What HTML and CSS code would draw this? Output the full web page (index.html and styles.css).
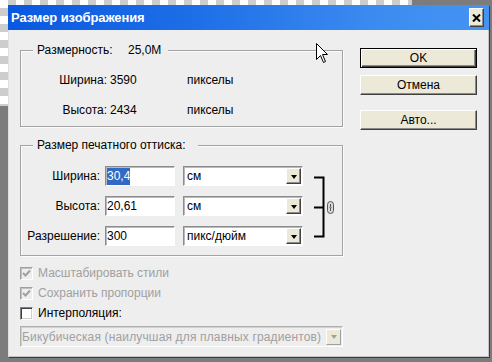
FILE: index.html
```html
<!DOCTYPE html>
<html lang="ru">
<head>
<meta charset="utf-8">
<title>Размер изображения</title>
<link rel="stylesheet" href="styles.css">
</head>
<body>
<div class="dialog">
  <div class="titlebar">
    <span class="title">Размер изображения</span>
    <span class="close"><svg width="9" height="8" viewBox="0 0 9 8"><path d="M1 0.5 L8 7.5 M8 0.5 L1 7.5" stroke="#000" stroke-width="2"/></svg></span>
  </div>
  <div class="client">
    <div class="left">
      <div class="group g1">
        <div class="legend"><span class="legend-key">Размерность:</span><span>25,0M</span></div>
        <div class="dims">
          <span class="lbl">Ширина:</span><span class="val">3590</span><span>пикселы</span>
          <span class="lbl">Высота:</span><span class="val">2434</span><span>пикселы</span>
        </div>
      </div>
      <div class="group g2">
        <div class="legend">Размер печатного оттиска:</div>
        <div class="print">
          <div class="fields">
            <span class="lbl">Ширина:</span>
            <span class="input"><span class="selected">30,4</span></span>
            <span class="select"><span class="sv">см</span><span class="arrow"><i></i></span></span>
            <span class="lbl">Высота:</span>
            <span class="input">20,61</span>
            <span class="select"><span class="sv">см</span><span class="arrow"><i></i></span></span>
            <span class="lbl">Разрешение:</span>
            <span class="input">300</span>
            <span class="select"><span class="sv">пикс/дюйм</span><span class="arrow"><i></i></span></span>
          </div>
          <svg class="link" width="33" height="80" viewBox="0 0 33 80">
            <path d="M11 11.5 H20.5 V70.5 H11 M11 41.5 H20.5" fill="none" stroke="#000" stroke-width="2"/>
            <rect x="24.5" y="35.5" width="6" height="12" rx="3" fill="#d8d8d8" stroke="#555"/>
            <path d="M27.5 38 V45" stroke="#555" stroke-width="1"/>
            <path d="M26 41.5 H29" stroke="#999" stroke-width="1"/>
          </svg>
        </div>
      </div>
      <div class="check disabled"><span class="box"><svg width="9" height="9" viewBox="0 0 9 9"><path d="M1 4 L3.5 6.5 L8 1.5" fill="none" stroke="#a0a0a0" stroke-width="2"/></svg></span>Масштабировать стили</div>
      <div class="check disabled"><span class="box"><svg width="9" height="9" viewBox="0 0 9 9"><path d="M1 4 L3.5 6.5 L8 1.5" fill="none" stroke="#a0a0a0" stroke-width="2"/></svg></span>Сохранить пропорции</div>
      <div class="check"><span class="box"></span>Интерполяция:</div>
      <div class="select wide disabled"><span class="sv">Бикубическая (наилучшая для плавных градиентов)</span><span class="arrow"><i></i></span></div>
    </div>
    <div class="buttons">
      <div class="btn default"><span>OK</span></div>
      <div class="btn">Отмена</div>
      <div class="btn auto">Авто...</div>
    </div>
  </div>
</div>
<svg class="cursor" width="13" height="21" viewBox="0 0 13 21"><path d="M0.5 0.5 V16.5 L4.5 12.5 L7.5 19.5 L9.5 18.5 L6.5 11.5 H11.5 Z" fill="#fff" stroke="#000" stroke-width="1" stroke-linejoin="miter"/></svg>
</body>
</html>
```
FILE: styles.css
```css
* { box-sizing: border-box; }
html, body { margin: 0; padding: 0; }
body {
  width: 492px;
  height: 362px;
  overflow: hidden;
  position: relative;
  background: #7c7c7c;
  font-family: "Liberation Sans", Arial, sans-serif;
  font-size: 12px;
  color: #000;
}
body::before {
  content: "";
  position: absolute;
  left: 0;
  top: 0;
  width: 412px;
  height: 106px;
  background-color: #fff;
  background-image:
    linear-gradient(45deg, #cdcdcd 25%, transparent 25%, transparent 75%, #cdcdcd 75%),
    linear-gradient(45deg, #cdcdcd 25%, transparent 25%, transparent 75%, #cdcdcd 75%);
  background-size: 16px 16px;
  background-position: 0 0, 8px 8px;
}
.dialog {
  position: relative;
  margin: 5px 0 0 8px;
  width: 481px;
  height: 352px;
  box-shadow: 1px 1px 0 #3c3c3c;
}
.titlebar {
  height: 25px;
  display: flex;
  align-items: center;
  justify-content: space-between;
  padding: 0 5px 0 3px;
  background: linear-gradient(to right, #0a58e0 0%, #1f6fe8 40%, #3b8af0 75%, #4594f3 100%);
}
.title {
  color: #fff;
  font-weight: bold;
  font-size: 13px;
  letter-spacing: -0.1px;
}
.close {
  width: 15px;
  height: 19px;
  display: flex;
  align-items: center;
  justify-content: center;
  background: #ece9d8;
  border: 1px solid;
  border-color: #fff #404040 #404040 #fff;
  box-shadow: inset -1px -1px 0 #8a8a8a;
}
.client {
  height: 327px;
  display: flex;
  align-items: flex-start;
  padding: 20px 0 0 11px;
  background: #eeeeee;
  border-left: 1px solid #dedede;
  border-right: 1px solid #c4c4c4;
  border-bottom: 1px solid #c4c4c4;
}
.left { width: 323px; }
.group {
  border: 1px solid #a3a3a3;
  box-shadow: inset 1px 1px 0 #fbfbfb, 1px 1px 0 #fbfbfb;
}
.legend {
  display: table;
  margin: -8px 0 0 12px;
  padding: 0 7px 0 4px;
  line-height: 14px;
  background: #eeeeee;
}
.legend-key { display: inline-block; width: 91px; }
.g2 .legend { padding-right: 12px; }
.dims {
  display: grid;
  grid-template-columns: 86px 80px auto;
  row-gap: 14px;
  line-height: 16px;
  margin-top: 15px;
  padding-bottom: 8px;
}
.lbl { text-align: right; }
.dims .val { padding-left: 3px; }
.g2 { margin-top: 18px; }
.print {
  display: flex;
  align-items: flex-start;
  margin-top: 14px;
  padding-bottom: 9px;
}
.fields {
  display: grid;
  grid-template-columns: 84px 78px 120px;
  grid-auto-rows: 20px;
  row-gap: 10px;
  align-items: center;
}
.fields .lbl { padding-right: 5px; }
.input {
  width: 70px;
  height: 20px;
  background: #fff;
  border: 1px solid;
  border-color: #8c8c8c #fff #fff #8c8c8c;
  box-shadow: inset 1px 1px 0 #b9b9b9;
  padding: 0 0 0 1px;
  line-height: 18px;
}
.selected {
  background: #316ac5;
  color: #fff;
  padding: 1px 0 2px;
}
.select {
  display: flex;
  align-items: center;
  justify-content: space-between;
  height: 20px;
  background: #fff;
  border: 1px solid;
  border-color: #8c8c8c #fff #fff #8c8c8c;
  box-shadow: inset 1px 1px 0 #b9b9b9;
  padding: 1px 1px 1px 2px;
}
.select .sv { padding-left: 1px; line-height: 16px; }
.arrow {
  width: 15px;
  height: 16px;
  display: flex;
  align-items: center;
  justify-content: center;
  background: #ece9d8;
  border: 1px solid;
  border-color: #fff #404040 #404040 #fff;
  box-shadow: inset -1px -1px 0 #8a8a8a;
}
.arrow i {
  display: block;
  width: 0;
  height: 0;
  border-left: 3.5px solid transparent;
  border-right: 3.5px solid transparent;
  border-top: 4px solid #000;
  margin-top: 1px;
}
.link { display: block; margin-top: 0; }
.check {
  display: flex;
  align-items: center;
  height: 20px;
}
.g2 + .check { margin-top: 7px; }
.box {
  width: 13px;
  height: 13px;
  margin-right: 5px;
  display: flex;
  align-items: center;
  justify-content: center;
  background: #fff;
  border: 1px solid;
  border-color: #808080 #fff #fff #808080;
  box-shadow: inset 1px 1px 0 #404040, inset -1px -1px 0 #d4d0c8;
}
.check.disabled { color: #a0a0a0; }
.check.disabled .box {
  background: #eeeeee;
  border-color: #a0a0a0 #fff #fff #a0a0a0;
  box-shadow: inset 1px 1px 0 #c0c0c0;
}
.select.wide {
  width: 323px;
  height: 21px;
  margin-top: 3px;
  padding-left: 1px;
  letter-spacing: 0.15px;
}
.select.disabled {
  background: #eeeeee;
  color: #a0a0a0;
  border-color: #b0b0b0 #fff #fff #b0b0b0;
  box-shadow: inset 1px 1px 0 #d0d0d0;
}
.select.wide .sv { padding-left: 0; }
.select.disabled .arrow { border-color: #fff #a0a0a0 #a0a0a0 #fff; box-shadow: none; }
.select.disabled .arrow i { border-top-color: #a0a0a0; }
.buttons {
  margin: -2px 0 0 17px;
  width: 117px;
  display: flex;
  flex-direction: column;
}
.btn {
  height: 20px;
  display: flex;
  align-items: center;
  justify-content: center;
  background: #ece9d8;
  border: 1px solid;
  border-color: #fff #404040 #404040 #fff;
  box-shadow: inset -1px -1px 0 #8a8a8a;
  margin-bottom: 7px;
}
.btn.default {
  border: 1px solid #000;
  box-shadow: inset 1px 1px 0 #fff, inset -1px -1px 0 #404040, inset -2px -2px 0 #8a8a8a;
}
.btn.auto { margin-top: 8px; }
.cursor {
  position: absolute;
  left: 316px;
  top: 43px;
}
```
